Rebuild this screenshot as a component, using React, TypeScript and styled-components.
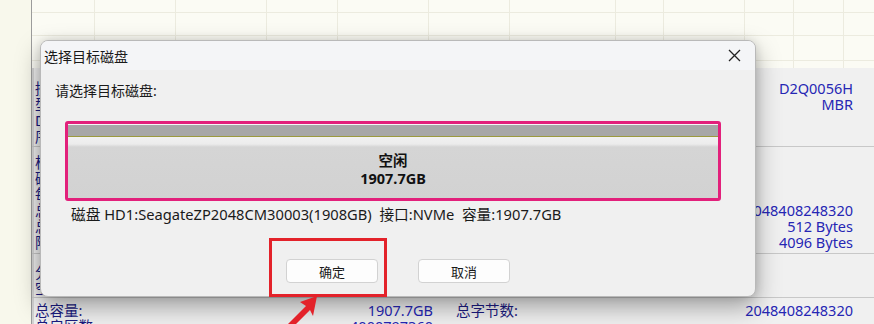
import React from "react";
import styled, { createGlobalStyle } from "styled-components";

const Global = createGlobalStyle`
  html, body { margin: 0; padding: 0; }
  body {
    width: 874px; height: 324px; overflow: hidden;
    font-family: "Noto Sans", "Noto Sans CJK SC", sans-serif;
    background: #f7f7ea;
  }
`;

const Page = styled.div`
  position: relative;
  width: 874px;
  height: 324px;
  display: flex;
  overflow: hidden;
`;

const LeftStrip = styled.div`
  width: 31px;
  flex: none;
  background: #f8f8ec;
`;

const Main = styled.div`
  flex: 1;
  min-width: 0;
  display: flex;
  flex-direction: column;
  border-left: 1px solid #9c9c9c;
  box-shadow: inset 2px 0 0 #d4d4d4;
  background: #f0f0f0;
`;

const TopGrid = styled.div`
  height: 68px;
  flex: none;
  display: flex;
  overflow: hidden;
  background-color: #fbfbf4;
  background-image:
    linear-gradient(#ecebdf, #ecebdf),
    linear-gradient(#ecebdf, #ecebdf),
    linear-gradient(#ecebdf, #ecebdf);
  background-size: 100% 1px;
  background-repeat: no-repeat;
  background-position: 0 12px, 0 35px, 0 60px;
`;

const GridCol = styled.div<{ $w: number }>`
  width: ${(p) => p.$w}px;
  flex: none;
  border-right: 1px solid #ecebdf;
`;

const InfoPanel = styled.div`
  flex: 1;
  display: flex;
  flex-direction: column;
  font-size: 14.5px;
`;

const Section = styled.div<{ $pt: number; $h: number; $line?: boolean }>`
  height: ${(p) => p.$h}px;
  padding: ${(p) => p.$pt}px 21px 0 3px;
  box-sizing: border-box;
  flex: none;
  border-bottom: ${(p) => (p.$line ? "1px solid #c8c8c8" : "none")};
`;

const InfoRow = styled.div`
  display: grid;
  grid-template-columns: 200px 198px 23px 1fr auto;
  height: 16px;
  line-height: 16px;
  white-space: nowrap;
`;

const Label = styled.span`
  color: #1a1a80;
`;

const Value = styled.span`
  text-align: right;
  color: #2626b4;
`;

const Dialog = styled.div`
  position: absolute;
  left: 40px;
  top: 40px;
  width: 716px;
  height: 257px;
  box-sizing: border-box;
  border: 1px solid #b9b9b9;
  border-radius: 8px;
  background: #f0f0f0;
  box-shadow: 0 10px 24px rgba(0, 0, 0, 0.34), 0 0 10px rgba(0, 0, 0, 0.12);
  display: flex;
  flex-direction: column;
  overflow: hidden;
  color: #1a1a1a;
`;

const TitleBar = styled.div`
  height: 29px;
  flex: none;
  display: flex;
  align-items: center;
  justify-content: space-between;
  padding: 0 14px 0 3px;
  background: #f4f5f7;
  font-size: 14px;
`;

const CloseBtn = styled.span`
  width: 14px;
  height: 14px;
  display: flex;
  align-items: center;
  justify-content: center;
`;

const Body = styled.div`
  display: flex;
  flex-direction: column;
  padding: 0 14px;
`;

const Prompt = styled.div`
  margin-top: 11px;
  height: 20px;
  line-height: 20px;
  font-size: 14px;
`;

const DiskBox = styled.div`
  margin: 20px 0 0 10px;
  width: 656px;
  height: 80px;
  box-sizing: border-box;
  border: 3px solid #e2207b;
  border-radius: 3px;
  display: flex;
  flex-direction: column;
  background: #f6f6f6;
  padding-top: 1px;
`;

const DiskHeader = styled.div`
  height: 11px;
  flex: none;
  background: #a7a7a7;
  border-bottom: 1px solid #9c9a3e;
`;

const DiskBody = styled.div`
  flex: 1;
  background: linear-gradient(#f1f1f1 0px, #ececec 7px, #d5d5d5 10px, #d2d2d2 100%);
  display: flex;
  flex-direction: column;
  align-items: center;
  justify-content: center;
  padding-top: 3px;
  font-size: 14.5px;
  font-weight: 700;
  line-height: 18px;
  color: #111;
`;

const DiskInfo = styled.div`
  margin: 3px 0 0 16px;
  height: 20px;
  line-height: 20px;
  font-size: 14.7px;
  white-space: pre;
`;

const ButtonRow = styled.div`
  margin: 35px 0 0 231px;
  display: flex;
  gap: 40px;
`;

const Button = styled.button`
  width: 92px;
  height: 24px;
  box-sizing: border-box;
  border: 1px solid #d2d2d2;
  border-radius: 4px;
  background: #fdfdfd;
  font-family: "Noto Sans CJK SC", "Noto Sans", sans-serif;
  font-size: 13px;
  color: #1a1a1a;
  padding: 0;
`;

const Highlight = styled.div`
  position: absolute;
  left: 269px;
  top: 238px;
  width: 118px;
  height: 59px;
  box-sizing: border-box;
  border: 3px solid #e3222a;
`;

const Arrow = styled.svg`
  position: absolute;
  left: 280px;
  top: 292px;
`;

const gridCols = [62, 80, 90, 70, 90, 80, 105, 47, 80, 48, 49, 49];

type Row = [string, string, string, string];

const section1: Row[] = [
  ["接口类型:", "NVMe", "", "D2Q0056H"],
  ["型号:", "SeagateZP2048CM30003", "", "MBR"],
  ["DGUID:", "", "", ""],
  ["序列号:", "", "", ""],
];
const section2: Row[] = [
  ["柱面数:", "249038", "", ""],
  ["磁头数:", "255", "", ""],
  ["每道扇区数:", "63", "", ""],
  ["总容量:", "1907.7GB", "", "2048408248320"],
  ["总扇区数:", "4000797360", "", "512 Bytes"],
  ["附加扇区数:", "0", "", "4096 Bytes"],
];
const section3: Row[] = [
  ["分区表类型:", "", "", ""],
  ["空闲容量:", "", "", ""],
];
const section4: Row[] = [
  ["总容量:", "1907.7GB", "总字节数:", "2048408248320"],
  ["总扇区数:", "4000797360", "", ""],
];

function Rows({ rows }: { rows: Row[] }) {
  return (
    <>
      {rows.map((r, i) => (
        <InfoRow key={i}>
          <Label>{r[0]}</Label>
          <Value>{r[1]}</Value>
          <span />
          <Label>{r[2]}</Label>
          <Value>{r[3]}</Value>
        </InfoRow>
      ))}
    </>
  );
}

export default function App() {
  return (
    <>
      <Global />
      <Page>
        <LeftStrip />
        <Main>
          <TopGrid>
            {gridCols.map((w, i) => (
              <GridCol key={i} $w={w} />
            ))}
          </TopGrid>
          <InfoPanel>
            <Section $pt={12} $h={79} $line>
              <Rows rows={section1} />
            </Section>
            <Section $pt={7} $h={107} $line>
              <Rows rows={section2} />
            </Section>
            <Section $pt={10} $h={44} $line>
              <Rows rows={section3} />
            </Section>
            <Section $pt={4} $h={40}>
              <Rows rows={section4} />
            </Section>
          </InfoPanel>
        </Main>

        <Dialog>
          <TitleBar>
            <span>选择目标磁盘</span>
            <CloseBtn>
              <svg width="13" height="13" viewBox="0 0 13 13">
                <path d="M1 1 L12 12 M12 1 L1 12" stroke="#222" strokeWidth="1.3" fill="none" />
              </svg>
            </CloseBtn>
          </TitleBar>
          <Body>
            <Prompt>请选择目标磁盘:</Prompt>
            <DiskBox>
              <DiskHeader />
              <DiskBody>
                <span>空闲</span>
                <span>1907.7GB</span>
              </DiskBody>
            </DiskBox>
            <DiskInfo>磁盘 HD1:SeagateZP2048CM30003(1908GB)  接口:NVMe  容量:1907.7GB</DiskInfo>
            <ButtonRow>
              <Button>确定</Button>
              <Button>取消</Button>
            </ButtonRow>
          </Body>
        </Dialog>

        <Highlight />
        <Arrow width="50" height="32" viewBox="0 0 50 32">
          <polygon points="37,4 20,10 26,14 8,32 16,32 30,18 33,24" fill="#e3222a" />
        </Arrow>
      </Page>
    </>
  );
}
